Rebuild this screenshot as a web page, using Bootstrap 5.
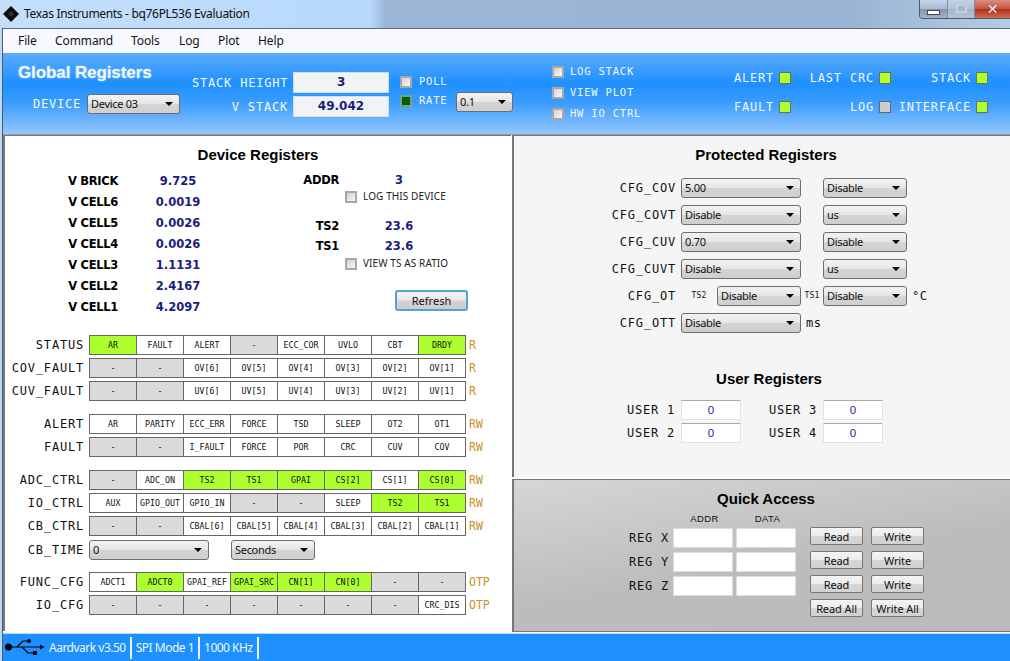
<!DOCTYPE html>
<html lang="en">
<head>
<meta charset="utf-8">
<title>Texas Instruments - bq76PL536 Evaluation</title>
<link href="https://cdn.jsdelivr.net/npm/bootstrap@5.3.0/dist/css/bootstrap.min.css" rel="stylesheet">
<style>
html,body{margin:0;height:661px;overflow:hidden;background:#b9d9fb}
.app{width:1010px;height:661px;display:flex;flex-direction:column;color:#000;font-family:"Noto Sans",sans-serif}
.mono{font-family:"DejaVu Sans Mono",monospace;font-size:12px;letter-spacing:.8px;white-space:pre}
.titlebar{height:28px;flex:none;display:flex;align-items:flex-start;background:linear-gradient(90deg,#c3dffc 0,#b8d9fb 370px,#9bb6d4 385px,#9ab5d3 850px,#b4cbe4 1010px);font-size:12px}
.tlogo{margin:6px 0 0 3px;flex:none}
.ttext{margin:5px 0 0 5px;line-height:18px;color:#111;letter-spacing:-.32px}
.winbtns{margin-left:auto;display:flex;height:19px;border-left:1px solid #4d5a6b;border-bottom:1px solid #4d5a6b;border-bottom-left-radius:4px;overflow:hidden;margin-right:0}
.wb{height:18px;display:flex;align-items:center;justify-content:center;border-right:1px solid #7d8ea3;background:linear-gradient(#c8d6e6,#a5b9d0 50%,#7f96b0 52%,#a0b4c9)}
.wb.w1{width:28px}.wb.w2{width:27px;background:linear-gradient(#c4d2e2,#afc2d6 50%,#a3b7cc 52%,#b2c4d7)}.wb.w3{width:35px;border-right:0;background:linear-gradient(#d9907f,#c8523f 50%,#b32a1b 52%,#cf6d57)}
.minbar{width:13px;height:5px;background:#fff;border:1px solid #445;margin-top:7px}
.maxbox{width:11px;height:9px;border:2px solid #c3d0de;background:#a3b6ca;margin-top:-2px}
.closex{color:#f1f1f1;font-family:"DejaVu Sans",sans-serif;font-weight:700;font-size:14px;line-height:1;text-shadow:0 0 1px #555}
.shell{flex:1;margin-left:2px;display:flex;flex-direction:column;min-height:0;border-left:1px solid #4c5a6c}
.menubar{height:25px;flex:none;background:#f8f9ff;display:flex;align-items:center;border-top:1px solid #5a6778;font-size:12px;padding-left:15px}
.menubar a{color:#111;text-decoration:none;line-height:16px;letter-spacing:-.1px}
.hdr{height:82px;flex:none;display:flex;background:linear-gradient(#5eabfc 0,#1e90ff 38%,#3c9dfd 62%,#93c6fd 99%);border-bottom:1px solid #9a9a9a;color:#f3f8ff}
.hcol1{width:189px;flex:none;padding:9px 0 0 15px}
.gtitle{font-family:"Liberation Sans",sans-serif;font-weight:700;font-size:17px;line-height:22px;letter-spacing:-.1px;text-shadow:0 0 2px rgba(255,255,255,.5)}
.devrow{display:flex;align-items:center;margin-top:10px;padding-left:15px}
.devrow .mono{width:54px}
.sel{appearance:none;-webkit-appearance:none;display:block;height:20px;padding:0 14px 0 3px;font-size:11px;letter-spacing:-.3px;line-height:18px;font-family:"Noto Sans",sans-serif;color:#111;border:1px solid #6e6e6e;border-radius:3px;background:url("data:image/svg+xml,%3Csvg xmlns='http://www.w3.org/2000/svg' width='8' height='4'%3E%3Cpath d='M0 0h8L4 4z' fill='%23000'/%3E%3C/svg%3E") no-repeat right 6px center,linear-gradient(#f3f3f3,#e6e6e6 48%,#d4d4d4 52%,#cfcfcf)}
.w93{width:93px}.w57{width:57px}.w120{width:120px}.w84{width:84px}
.hcol2{width:197px;flex:none;padding-top:19px}
.statrow{display:flex;align-items:center;justify-content:flex-end;height:21px;margin-bottom:3px}
.statval{width:96px;height:21px;margin-left:5px;background:#f2f3f5;border:1px solid #cfe0f5;text-align:center;color:#1b1b7e;font-family:"DejaVu Sans",sans-serif;font-weight:700;font-size:12px;line-height:19px}
.hcol3{width:163px;flex:none;padding:23px 0 0 11px}
.hck{display:flex;align-items:center;height:12px}
.box{appearance:none;-webkit-appearance:none;display:block;flex:none;margin:0;width:12px;height:12px;border:2px solid #a8a8a8;border-radius:0;background:linear-gradient(135deg,#d2d2d2,#f8f8f8)}
.box.on{background:#006400;border-color:#7f9b8f}
.hck .mono{font-size:10.5px;letter-spacing:.8px;margin-left:7px;width:37px}
.hck .sel{margin-top:2px}
.hcol4{width:179px;flex:none;padding-top:13px}
.hcol4 .hck{margin-bottom:9px}
.hcol4 .mono{width:auto;margin-left:6px}
.leds{display:grid;grid-template-columns:auto auto auto;grid-auto-rows:29px;padding-top:19px;justify-items:end;margin-left:0}
.leds>div{display:flex;align-items:flex-start;height:14px}
.ledwrap1{width:60px}.ledwrap2{width:100px}.ledwrap3{width:97px}
.led{display:block;width:12px;height:12px;margin:0 0 0 5px;background:#adff2f;border:1px solid #6f6f58}
.led.off{background:#cdcdcd;border-color:#666}
.leds .mono{line-height:12px}
.main{flex:1;display:grid;grid-template-columns:508px minmax(0,1fr);min-height:0;background:#fff;border-bottom:1px solid #fff}
.lpanel{background:#fff;border-left:2px solid #777;border-top:1px solid #777;padding:9px 0 0 0;overflow:hidden;margin-bottom:1px}
.ptitle{font-family:"Liberation Sans",sans-serif;font-weight:700;font-size:15px;line-height:20px;text-align:center;color:#000}
.ll{display:flex;height:164px;margin-top:6px}
.bl1{width:247px;flex:none}
.brow{display:flex;height:21px;align-items:center;font-family:"DejaVu Sans",sans-serif;font-weight:700;font-size:11.5px}
.brow .bk{width:113px;text-align:right;letter-spacing:-.3px}
.brow .bv{width:120px;text-align:center;color:#1b1b7e;font-size:11.5px}
.bl2{flex:1}
.brow2{display:flex;height:20px;align-items:center;font-family:"DejaVu Sans",sans-serif;font-weight:700;font-size:11.5px;margin-bottom:0}
.brow2 .bk{width:87px;text-align:right;letter-spacing:-.3px}
.brow2 .bv{width:120px;text-align:center;color:#1b1b7e;font-size:11.5px}
.bchk{display:flex;align-items:center;height:13px;padding-left:93px;font-size:10px;color:#222;font-family:"Noto Sans",sans-serif;white-space:nowrap}
.bchk span{margin-left:6px;letter-spacing:.1px}
.refresh{display:block;margin:20px 0 0 143px;width:73px;height:21px;padding:0;font-family:"Noto Sans",sans-serif;font-size:11px;line-height:17px;color:#111;border:2px solid #4fa6d6;border-radius:3px;background:linear-gradient(#f4f4f4,#e8e8e8 48%,#d3d3d3 52%,#cdcdcd)}
.regs{margin-top:0}
.rrow{display:flex;align-items:center;height:20px;margin-bottom:3px}
.rrow.g{margin-top:13px}
.rlab{width:79px;flex:none;text-align:right;line-height:20px;margin-right:5px;color:#111}
.rcells{display:grid;grid-template-columns:repeat(8,47px);border:1px solid #666;border-left:0;height:20px;width:377px;flex:none}
.cc{border-left:1px solid #666;font-family:"DejaVu Sans Mono",monospace;font-size:8.3px;line-height:18px;text-align:center;white-space:nowrap;color:#111;overflow:hidden}
.cc.x{background:#dbdbdb}
.cc.g1{background:#adff2f}
.rkind{margin-left:3px;font-family:"DejaVu Sans Mono",monospace;font-size:11.5px;color:#c98f1d;line-height:20px}
.rrow.tm{margin-bottom:0;margin-top:4px}
.rrow.tm .sel{margin-right:22px}
.rrow.fn{margin-top:12px}
.rpanel{display:flex;flex-direction:column;min-height:0;margin-left:1px;background:#fff}
.prot{height:342px;flex:none;background:#f5f5f5;border-left:2px solid #777;border-top:1px solid #777;padding-top:9px}
.prot .t1{padding-left:8px}
.prows{margin-top:13px}
.prow{display:flex;align-items:center;height:20px;margin-bottom:7px}
.prow .plab{width:162px;text-align:right;flex:none;margin-right:5px;line-height:20px;color:#111}
.sp23{width:22px;flex:none}
.smt{font-family:"DejaVu Sans Mono",monospace;font-size:8px;color:#111;letter-spacing:.2px}
.ts2{width:36px;text-align:center;flex:none}
.ts1{width:22px;text-align:center;flex:none}
.unit{margin-left:5px;font-family:"DejaVu Sans Mono",monospace;font-size:12px;color:#111;letter-spacing:.6px}
.utitle{margin-top:36px;padding-left:14px}
.urows{margin-top:11px}
.urow{display:flex;align-items:center;height:20px;margin-bottom:3px;padding-left:113px}
.urow .mono{width:48px;text-align:right;margin-right:6px;color:#111}
.ubox{display:block;width:60px;height:20px;padding:0;margin-left:0;text-align:center;font-family:"Liberation Sans",sans-serif;font-size:11.5px;color:#2b1b9e;background:#fff;border:1px solid #dfe3ec;border-top-color:#aaa;border-radius:1px}
.usep{width:28px;flex:none}
.quick{flex:1;margin-top:2px;background:linear-gradient(170deg,#d6d6d6,#bcbcbc 55%,#bbb);border:1px solid #777;border-left-width:2px;border-right:0;padding-top:9px;min-height:0}
.quick .t1{padding-left:8px}
.qhead{display:flex;height:14px;margin-top:3px;margin-bottom:1px;padding-left:159px;font-family:"Liberation Sans",sans-serif;font-size:9.5px;letter-spacing:.4px;line-height:14px;color:#111}
.qhead span{width:63px;text-align:center}
.qrow{display:flex;height:24px;padding-left:113px}
.qrow .mono{width:42px;text-align:right;margin-right:4px;line-height:20px;color:#111;margin-top:1px;flex:none}
.qin{display:block;width:60px;height:20px;padding:0;margin:1px 3px 0 0;background:#fff;border:1px solid #ddd;border-radius:1px;flex:none}
.qb{display:block;flex:none;width:53px;height:18px;padding:0;font-family:"Noto Sans",sans-serif;font-size:11px;letter-spacing:-.1px;line-height:15px;color:#111;border:1px solid #777;border-radius:2px;background:linear-gradient(#f4f4f4,#ececec 48%,#d6d6d6 52%,#d2d2d2);margin-right:8px}
.qb1{margin-left:11px}
.qb2{margin-left:183px}
.statusbar{height:27px;flex:none;background:#1e90ff;display:flex;align-items:center;color:#f0f7ff;font-size:12px;letter-spacing:-.5px;margin-top:1px}
.statusbar svg{margin:-2px 4px 0 2px;flex:none}
.sb{height:22px;line-height:22px;padding:0 4px;border-right:2px solid #e6f2ff}
.sb.first{padding-left:0;padding-right:4px}
</style>
</head>
<body>
<div class="app">
  <div class="titlebar">
    <svg class="tlogo" width="16" height="16" viewBox="0 0 16 16"><path d="M8 0 16 8 8 16 0 8Z" fill="#0c0c0c"/><path d="M8 5 11 8 8 11 5 8Z" fill="#333"/></svg>
    <div class="ttext">Texas Instruments - bq76PL536 Evaluation</div>
    <div class="winbtns">
      <div class="wb w1"><span class="minbar"></span></div>
      <div class="wb w2"><span class="maxbox"></span></div>
      <div class="wb w3"><span class="closex">✕</span></div>
    </div>
  </div>
  <div class="shell">
    <nav class="menubar gap-0">
      <a href="#" style="width:37px">File</a><a href="#" style="width:76px">Command</a><a href="#" style="width:48px">Tools</a><a href="#" style="width:39px">Log</a><a href="#" style="width:40px">Plot</a><a href="#">Help</a>
    </nav>
    <header class="hdr">
      <div class="hcol1">
        <div class="gtitle">Global Registers</div>
        <div class="devrow"><span class="mono">DEVICE</span><select class="sel w93"><option>Device 03</option></select></div>
      </div>
      <div class="hcol2">
        <div class="statrow"><span class="mono">STACK HEIGHT</span><div class="statval">3</div></div>
        <div class="statrow"><span class="mono">V STACK</span><div class="statval">49.042</div></div>
      </div>
      <div class="hcol3">
        <div class="hck" style="margin-bottom:7px"><input class="box" type="checkbox"><span class="mono">POLL</span></div>
        <div class="hck"><input class="box on" type="checkbox"><span class="mono">RATE</span><select class="sel w57"><option>0.1</option></select></div>
      </div>
      <div class="hcol4">
        <div class="hck"><input class="box" type="checkbox"><span class="mono">LOG STACK</span></div>
        <div class="hck"><input class="box" type="checkbox"><span class="mono">VIEW PLOT</span></div>
        <div class="hck"><input class="box" type="checkbox"><span class="mono">HW IO CTRL</span></div>
      </div>
      <div class="leds">
        <div class="ledwrap1 justify-content-end"><span class="mono">ALERT</span><i class="led"></i></div>
        <div class="ledwrap2 justify-content-end"><span class="mono">LAST CRC</span><i class="led"></i></div>
        <div class="ledwrap3 justify-content-end"><span class="mono">STACK</span><i class="led"></i></div>
        <div class="ledwrap1 justify-content-end"><span class="mono">FAULT</span><i class="led"></i></div>
        <div class="ledwrap2 justify-content-end"><span class="mono">LOG</span><i class="led off"></i></div>
        <div class="ledwrap3 justify-content-end"><span class="mono">INTERFACE</span><i class="led"></i></div>
      </div>
    </header>
    <main class="main">
      <section class="lpanel">
        <div class="ptitle">Device Registers</div>
        <div class="ll">
          <div class="bl1">
            <div class="brow"><span class="bk">V BRICK</span><span class="bv">9.725</span></div>
            <div class="brow"><span class="bk">V CELL6</span><span class="bv">0.0019</span></div>
            <div class="brow"><span class="bk">V CELL5</span><span class="bv">0.0026</span></div>
            <div class="brow"><span class="bk">V CELL4</span><span class="bv">0.0026</span></div>
            <div class="brow"><span class="bk">V CELL3</span><span class="bv">1.1131</span></div>
            <div class="brow"><span class="bk">V CELL2</span><span class="bv">2.4167</span></div>
            <div class="brow"><span class="bk">V CELL1</span><span class="bv">4.2097</span></div>
          </div>
          <div class="bl2">
            <div class="brow2"><span class="bk">ADDR</span><span class="bv">3</span></div>
            <div class="bchk" style="margin-top:-1px"><input class="box" type="checkbox"><span>LOG THIS DEVICE</span></div>
            <div class="brow2" style="margin-top:14px"><span class="bk">TS2</span><span class="bv">23.6</span></div>
            <div class="brow2"><span class="bk">TS1</span><span class="bv">23.6</span></div>
            <div class="bchk"><input class="box" type="checkbox"><span>VIEW TS AS RATIO</span></div>
            <button type="button" class="btn refresh">Refresh</button>
          </div>
        </div>
        <div class="regs">
          <div class="rrow"><span class="rlab mono">STATUS</span><div class="rcells"><div class="cc g1">AR</div><div class="cc">FAULT</div><div class="cc">ALERT</div><div class="cc x">-</div><div class="cc">ECC_COR</div><div class="cc">UVLO</div><div class="cc">CBT</div><div class="cc g1">DRDY</div></div><span class="rkind">R</span></div>
          <div class="rrow"><span class="rlab mono">COV_FAULT</span><div class="rcells"><div class="cc x">-</div><div class="cc x">-</div><div class="cc">OV[6]</div><div class="cc">OV[5]</div><div class="cc">OV[4]</div><div class="cc">OV[3]</div><div class="cc">OV[2]</div><div class="cc">OV[1]</div></div><span class="rkind">R</span></div>
          <div class="rrow"><span class="rlab mono">CUV_FAULT</span><div class="rcells"><div class="cc x">-</div><div class="cc x">-</div><div class="cc">UV[6]</div><div class="cc">UV[5]</div><div class="cc">UV[4]</div><div class="cc">UV[3]</div><div class="cc">UV[2]</div><div class="cc">UV[1]</div></div><span class="rkind">R</span></div>
          <div class="rrow g"><span class="rlab mono">ALERT</span><div class="rcells"><div class="cc">AR</div><div class="cc">PARITY</div><div class="cc">ECC_ERR</div><div class="cc">FORCE</div><div class="cc">TSD</div><div class="cc">SLEEP</div><div class="cc">OT2</div><div class="cc">OT1</div></div><span class="rkind">RW</span></div>
          <div class="rrow"><span class="rlab mono">FAULT</span><div class="rcells"><div class="cc x">-</div><div class="cc x">-</div><div class="cc">I_FAULT</div><div class="cc">FORCE</div><div class="cc">POR</div><div class="cc">CRC</div><div class="cc">CUV</div><div class="cc">COV</div></div><span class="rkind">RW</span></div>
          <div class="rrow g"><span class="rlab mono">ADC_CTRL</span><div class="rcells"><div class="cc x">-</div><div class="cc">ADC_ON</div><div class="cc g1">TS2</div><div class="cc g1">TS1</div><div class="cc g1">GPAI</div><div class="cc g1">CS[2]</div><div class="cc">CS[1]</div><div class="cc g1">CS[0]</div></div><span class="rkind">RW</span></div>
          <div class="rrow"><span class="rlab mono">IO_CTRL</span><div class="rcells"><div class="cc">AUX</div><div class="cc">GPIO_OUT</div><div class="cc">GPIO_IN</div><div class="cc x">-</div><div class="cc x">-</div><div class="cc">SLEEP</div><div class="cc g1">TS2</div><div class="cc g1">TS1</div></div><span class="rkind">RW</span></div>
          <div class="rrow"><span class="rlab mono">CB_CTRL</span><div class="rcells"><div class="cc x">-</div><div class="cc x">-</div><div class="cc">CBAL[6]</div><div class="cc">CBAL[5]</div><div class="cc">CBAL[4]</div><div class="cc">CBAL[3]</div><div class="cc">CBAL[2]</div><div class="cc">CBAL[1]</div></div><span class="rkind">RW</span></div>
          <div class="rrow tm"><span class="rlab mono">CB_TIME</span><select class="sel w120"><option>0</option></select><select class="sel w84"><option>Seconds</option></select></div>
          <div class="rrow fn"><span class="rlab mono">FUNC_CFG</span><div class="rcells"><div class="cc">ADCT1</div><div class="cc g1">ADCT0</div><div class="cc">GPAI_REF</div><div class="cc g1">GPAI_SRC</div><div class="cc g1">CN[1]</div><div class="cc g1">CN[0]</div><div class="cc x">-</div><div class="cc x">-</div></div><span class="rkind">OTP</span></div>
          <div class="rrow"><span class="rlab mono">IO_CFG</span><div class="rcells"><div class="cc x">-</div><div class="cc x">-</div><div class="cc x">-</div><div class="cc x">-</div><div class="cc x">-</div><div class="cc x">-</div><div class="cc x">-</div><div class="cc">CRC_DIS</div></div><span class="rkind">OTP</span></div>
        </div>
      </section>
      <section class="rpanel">
        <div class="prot">
          <div class="ptitle t1">Protected Registers</div>
          <div class="prows">
            <div class="prow"><span class="plab mono">CFG_COV</span><select class="sel w120"><option>5.00</option></select><span class="sp23"></span><select class="sel w84"><option>Disable</option></select></div>
            <div class="prow"><span class="plab mono">CFG_COVT</span><select class="sel w120"><option>Disable</option></select><span class="sp23"></span><select class="sel w84"><option>us</option></select></div>
            <div class="prow"><span class="plab mono">CFG_CUV</span><select class="sel w120"><option>0.70</option></select><span class="sp23"></span><select class="sel w84"><option>Disable</option></select></div>
            <div class="prow"><span class="plab mono">CFG_CUVT</span><select class="sel w120"><option>Disable</option></select><span class="sp23"></span><select class="sel w84"><option>us</option></select></div>
            <div class="prow"><span class="plab mono">CFG_OT</span><span class="smt ts2">TS2</span><select class="sel w84"><option>Disable</option></select><span class="smt ts1">TS1</span><select class="sel w84"><option>Disable</option></select><span class="unit">°C</span></div>
            <div class="prow"><span class="plab mono">CFG_OTT</span><select class="sel w120"><option>Disable</option></select><span class="unit">ms</span></div>
          </div>
          <div class="ptitle utitle">User Registers</div>
          <div class="urows">
            <div class="urow"><span class="mono">USER 1</span><input class="ubox" value="0"><span class="usep"></span><span class="mono">USER 3</span><input class="ubox" value="0"></div>
            <div class="urow"><span class="mono">USER 2</span><input class="ubox" value="0"><span class="usep"></span><span class="mono">USER 4</span><input class="ubox" value="0"></div>
          </div>
        </div>
        <div class="quick">
          <div class="ptitle t1">Quick Access</div>
          <div class="qhead"><span>ADDR</span><span>DATA</span></div>
          <div class="qrow"><span class="mono">REG X</span><input class="qin"><input class="qin"><button type="button" class="btn qb qb1">Read</button><button type="button" class="btn qb">Write</button></div>
          <div class="qrow"><span class="mono">REG Y</span><input class="qin"><input class="qin"><button type="button" class="btn qb qb1">Read</button><button type="button" class="btn qb">Write</button></div>
          <div class="qrow"><span class="mono">REG Z</span><input class="qin"><input class="qin"><button type="button" class="btn qb qb1">Read</button><button type="button" class="btn qb">Write</button></div>
          <div class="qrow"><button type="button" class="btn qb qb2">Read All</button><button type="button" class="btn qb">Write All</button></div>
        </div>
      </section>
    </main>
    <footer class="statusbar">
      <svg width="40" height="18" viewBox="0 0 40 18"><circle cx="3.5" cy="9" r="3.5" fill="#000"/><path d="M3 9h33" stroke="#000" stroke-width="1.2"/><path d="M35 6.5 39.5 9 35 11.5z" fill="#000"/><path d="M12 9 18 3h5M17 9l6 6h5" stroke="#000" stroke-width="1.2" fill="none"/><circle cx="24" cy="3" r="2" fill="#000"/><rect x="28" y="13" width="4" height="4" fill="#000"/></svg>
      <div class="sb first">Aardvark v3.50</div><div class="sb">SPI Mode 1</div><div class="sb">1000 KHz</div>
    </footer>
  </div>
</div>
<script src="https://cdn.jsdelivr.net/npm/bootstrap@5.3.0/dist/js/bootstrap.bundle.min.js"></script>
</body>
</html>
